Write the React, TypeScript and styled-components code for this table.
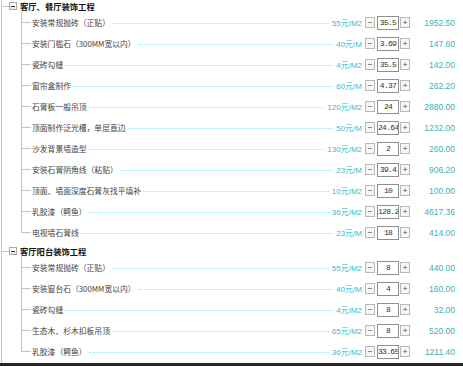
import React from "react";
import styled, { createGlobalStyle } from "styled-components";

const GlobalStyle = createGlobalStyle`
  html, body { margin: 0; padding: 0; background: #fff; }
  body { font-family: "Noto Sans CJK SC", "Liberation Sans", sans-serif; }
`;

const LINE = "#c6c6c6";

const Page = styled.div`
  width: 463px;
  height: 366px;
  box-sizing: border-box;
  border-bottom: 3px solid #262626;
  overflow: hidden;
`;

const Tree = styled.div`
  margin-left: 1px;
  height: 100%;
  border-left: 1px solid ${LINE};
  display: flex;
  flex-direction: column;
  gap: 2px;
`;

const Section = styled.section`
  display: flex;
  flex-direction: column;
`;

const Header = styled.div`
  height: 12px;
  display: flex;
  align-items: center;
`;

const HeaderBranch = styled.span`
  width: 7px;
  height: 1px;
  background: ${LINE};
  flex: none;
`;

const Toggle = styled.span`
  width: 6px;
  height: 6px;
  flex: none;
  border: 1px solid #a9a9a9;
  background: linear-gradient(#fff, #e9e9e9);
  display: flex;
  align-items: center;
  justify-content: center;
  &::before {
    content: "";
    width: 4px;
    height: 1px;
    background: #333;
  }
`;

const Title = styled.span`
  margin-left: 3px;
  font-size: 8.3px;
  font-weight: 700;
  color: #111;
  white-space: nowrap;
  line-height: 12px;
`;

const List = styled.div`
  margin-left: 19px;
  display: flex;
  flex-direction: column;
`;

const Row = styled.div`
  height: 21px;
  display: flex;
  align-items: center;
`;

const Connector = styled.span<{ $last?: boolean }>`
  flex: none;
  width: 10px;
  align-self: stretch;
  background:
    linear-gradient(${LINE}, ${LINE}) left top / 1px ${(p) => (p.$last ? "50%" : "100%")} no-repeat,
    linear-gradient(${LINE}, ${LINE}) left 50% / 100% 1px no-repeat;
`;

const Label = styled.span`
  margin-left: 1px;
  font-size: 7.8px;
  color: #444;
  white-space: nowrap;
  line-height: 12px;
`;

const Leader = styled.span`
  flex: 1;
  min-width: 0;
  height: 0;
  margin: 1px 3px 0 2px;
  border-bottom: 1px dotted #a6dde9;
`;

const Price = styled.span`
  font-family: "Liberation Sans", "Noto Sans CJK SC", sans-serif;
  font-size: 8px;
  color: #3cb9c8;
  white-space: nowrap;
`;

const StepButton = styled.span<{ $gap: number }>`
  flex: none;
  width: 8px;
  height: 9px;
  margin-left: ${(p) => p.$gap}px;
  border: 1px solid #b9b9b9;
  background: #f6f6f6;
  color: #444;
  font-family: "Liberation Sans", sans-serif;
  font-size: 8px;
  line-height: 9px;
  text-align: center;
`;

const Qty = styled.input`
  flex: none;
  box-sizing: border-box;
  width: 22px;
  height: 14px;
  margin-left: 2px;
  padding: 0;
  border: 1px solid #8f8f8f;
  background: #fff;
  color: #333;
  font-family: "Liberation Mono", monospace;
  font-size: 8px;
  letter-spacing: -0.7px;
  text-align: center;
  outline: none;
`;

const Total = styled.span`
  flex: none;
  width: 46px;
  margin-left: 7px;
  padding-right: 8px;
  box-sizing: border-box;
  text-align: right;
  font-family: "Liberation Sans", sans-serif;
  font-size: 8.5px;
  color: #38b4bb;
`;

type Item = { name: string; price: string; qty: string; total: string };

const sections: { title: string; items: Item[] }[] = [
  {
    title: "客厅、餐厅装饰工程",
    items: [
      { name: "安装常规抛砖（正贴）", price: "55元/M2", qty: "35.5", total: "1952.50" },
      { name: "安装门槛石（300MM宽以内）", price: "40元/M", qty: "3.69", total: "147.60" },
      { name: "瓷砖勾缝", price: "4元/M2", qty: "35.5", total: "142.00" },
      { name: "窗帘盒制作", price: "60元/M", qty: "4.37", total: "262.20" },
      { name: "石膏板一般吊顶", price: "120元/M2", qty: "24", total: "2880.00" },
      { name: "顶面制作泛光槽，单层直边", price: "50元/M", qty: "24.64", total: "1232.00" },
      { name: "沙发背景墙造型", price: "130元/M2", qty: "2", total: "260.00" },
      { name: "安装石膏阴角线（粘贴）", price: "23元/M", qty: "39.4", total: "906.20" },
      { name: "顶面、墙面深度石膏灰找平填补", price: "10元/M2", qty: "10", total: "100.00" },
      { name: "乳胶漆（鳄鱼）", price: "36元/M2", qty: "128.26", total: "4617.36" },
      { name: "电视墙石膏线", price: "23元/M", qty: "18", total: "414.00" },
    ],
  },
  {
    title: "客厅阳台装饰工程",
    items: [
      { name: "安装常规抛砖（正贴）", price: "55元/M2", qty: "8", total: "440.00" },
      { name: "安装窗台石（300MM宽以内）", price: "40元/M", qty: "4", total: "160.00" },
      { name: "瓷砖勾缝", price: "4元/M2", qty: "8", total: "32.00" },
      { name: "生态木、杉木扣板吊顶", price: "65元/M2", qty: "8", total: "520.00" },
      { name: "乳胶漆（鳄鱼）", price: "36元/M2", qty: "33.65", total: "1211.40" },
    ],
  },
];

export default function App() {
  return (
    <>
      <GlobalStyle />
      <Page>
        <Tree>
          {sections.map((s) => (
            <Section key={s.title}>
              <Header>
                <HeaderBranch />
                <Toggle />
                <Title>{s.title}</Title>
              </Header>
              <List>
                {s.items.map((it, i) => (
                  <Row key={i}>
                    <Connector $last={i === s.items.length - 1} />
                    <Label>{it.name}</Label>
                    <Leader />
                    <Price>{it.price}</Price>
                    <StepButton $gap={3}>−</StepButton>
                    <Qty value={it.qty} readOnly />
                    <StepButton $gap={1}>+</StepButton>
                    <Total>{it.total}</Total>
                  </Row>
                ))}
              </List>
            </Section>
          ))}
        </Tree>
      </Page>
    </>
  );
}
